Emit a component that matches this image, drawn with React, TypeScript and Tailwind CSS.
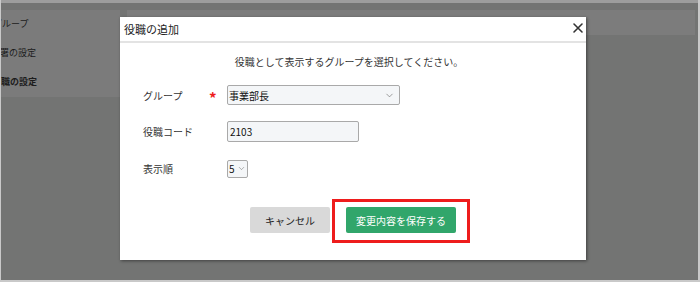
import { ChevronDown } from 'lucide-react';

const jp = "font-['Noto_Sans_CJK_JP','Noto_Sans',sans-serif]";

export default function App() {
  const sideItems = [
    { label: 'グループ', offset: 'ml-[-8px]', bold: false },
    { label: '部署の設定', offset: 'ml-[-10px]', bold: false },
    { label: '役職の設定', offset: 'ml-[-9px]', bold: true },
  ];

  return (
    <div className={`w-[700px] h-[282px] bg-[#c9c9c9] pl-px pr-[2px] pb-[2px] ${jp}`}>
      <div className="relative w-full h-full bg-[#737473] overflow-hidden">
        {/* 背景のページ (オーバーレイで暗くなっている) */}
        <div className="h-[3px] bg-[#9d9d9d]" />
        <div className="flex items-start gap-[7px] mt-[7px]">
          <div className="w-[119px] h-[87px] bg-[#7b7b7b] overflow-hidden pt-[7px]">
            {sideItems.map((item) => (
              <div
                key={item.label}
                className={`${item.offset} h-[29px] leading-[14px] text-[9px] whitespace-nowrap text-[#1c1c1c] ${item.bold ? 'font-bold' : ''}`}
              >
                {item.label}
              </div>
            ))}
          </div>
          <div className="w-[568px] h-[25px] bg-[#7c7c7c]" />
        </div>

        {/* モーダル */}
        <div className="absolute left-[119px] top-[17px] w-[466px] h-[243px] bg-white shadow-[1px_1px_3px_rgba(0,0,0,0.45)] text-[#333]">
          <div className="h-[26px] border-b-2 border-[#e3e3e3] flex items-center justify-between pl-[4px] pr-[4px]">
            <span className="text-[11px] leading-[14px] text-[#222]">役職の追加</span>
            <svg width="16" height="16" viewBox="0 0 16 16" className="mr-[-4px] mt-[-2px]">
              <path d="M4 4 L12 12 M12 4 L4 12" stroke="#333" strokeWidth="1.6" strokeLinecap="round" />
            </svg>
          </div>

          <p className="mt-[11px] text-center text-[10px] leading-[15px] pr-[8px]">
            役職として表示するグループを選択してください。
          </p>

          <div className="mt-[16px] pl-[23px] text-[10px]">
            <div className="flex items-center h-[20px]">
              <span className="w-[66px]">グループ</span>
              <span className="w-[18px] text-[#ee1c1c] text-[15px] font-bold leading-none pt-[4px]">*</span>
              <div className="w-[173px] h-[20px] border border-[#a9a9a9] rounded-[2px] bg-[#f4f6f8] flex items-center justify-between pl-[1px] pr-[4px]">
                <span className="text-[10px] text-[#111]">事業部長</span>
                <ChevronDown size={11} strokeWidth={1.2} className="text-[#555]" />
              </div>
            </div>

            <div className="flex items-center h-[21px] mt-[16px]">
              <span className="w-[84px]">役職コード</span>
              <div className="w-[132px] h-[21px] border border-[#a9a9a9] rounded-[2px] bg-[#f4f6f8] flex items-center pl-[2px]">
                <span className="text-[10px] text-[#111]">2103</span>
              </div>
            </div>

            <div className="flex items-center h-[17px] mt-[18px]">
              <span className="w-[84px]">表示順</span>
              <div className="w-[21px] h-[18px] border border-[#a9a9a9] rounded-[2px] bg-[#f4f6f8] flex items-center justify-between pl-[1px] pr-[1px]">
                <span className="text-[10px] text-[#111]">5</span>
                <ChevronDown size={9} strokeWidth={1.2} className="text-[#555]" />
              </div>
            </div>
          </div>

          <div className="mt-[30px] flex justify-center gap-[16px] text-[10px]">
            <button className="w-[80px] h-[26px] bg-[#d9d9d9] rounded-[2px] text-[#222]">キャンセル</button>
            <div className="relative">
              <button className="w-[110px] h-[26px] bg-[#31a66b] rounded-[2px] text-white">変更内容を保存する</button>
              <div className="absolute left-[-14px] right-[-14px] top-[-8px] bottom-[-10px] border-[3px] border-[#ee1c1c]" />
            </div>
          </div>
        </div>
      </div>
    </div>
  );
}
